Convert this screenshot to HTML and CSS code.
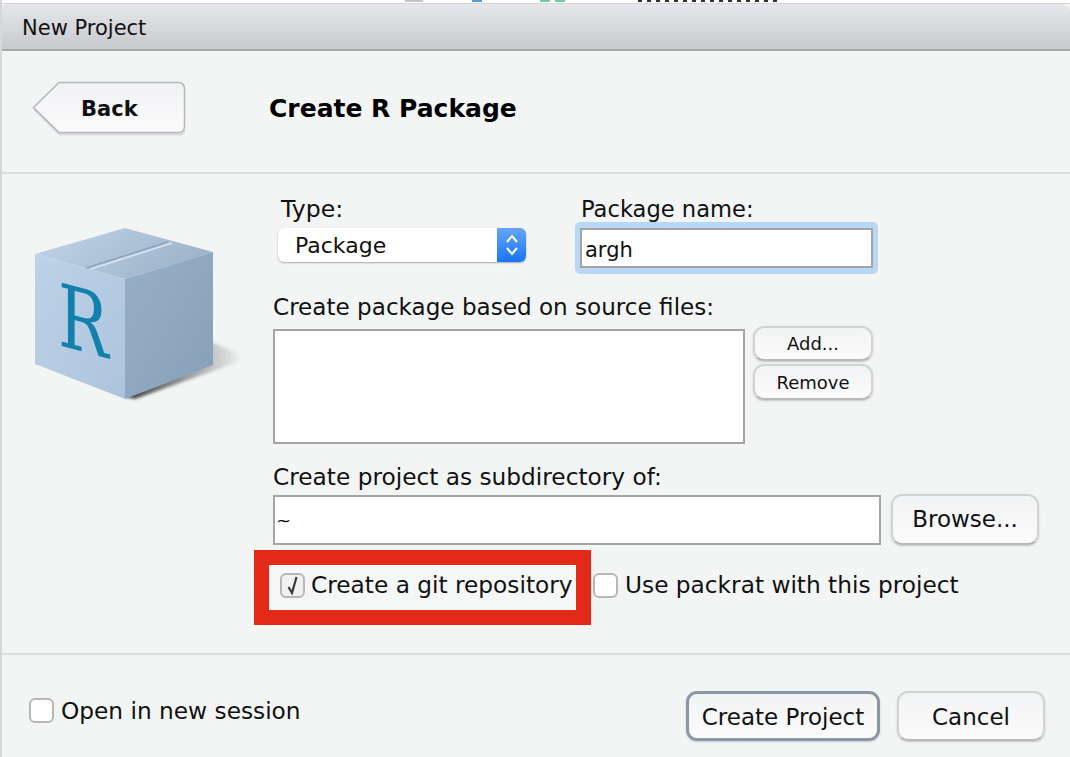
FILE: index.html
```html
<!DOCTYPE html>
<html>

<head>
  <title>New Project</title>
  <link rel="stylesheet" href="styles.css">
</head>

<body>
  <div class="window">
    <div class="behind">
      <span class="scrap scrapGrey"></span>
      <span class="scrap scrapBlue"></span>
      <span class="scrap scrapGreen"></span>
      <span class="scrap scrapGreen2"></span>
      <span class="scrap scrapDark"></span>
    </div>
    <div class="titlebar">New Project</div>

    <div class="header">
      <button type="button" class="backButton">
        <svg width="160" height="60" viewBox="0 0 160 60">
          <defs>
            <linearGradient id="backFill" x1="0" x2="0" y1="0" y2="1">
              <stop offset="0%" stop-color="#f1f2f4" />
              <stop offset="100%" stop-color="#fbfbfc" />
            </linearGradient>
          </defs>
          <path d="M27 2 H148 Q153 2 153 7 V48 Q153 53 148 53 H27 L1 27 Z" fill="#d8dade" transform="translate(0 1.5)" />
          <path d="M27 1.5 H146 Q152.5 1.5 152.5 8 V45 Q152.5 51.5 146 51.5 H27 L1.5 26.5 Z" fill="url(#backFill)" stroke="#b4b7bd" stroke-width="1.5" />
          <text x="49" y="35" class="backLabel">Back</text>
        </svg>
      </button>
      <h1 class="pageTitle">Create R Package</h1>
    </div>

    <div class="main">
      <div class="iconColumn">
        <svg width="240" height="210" viewBox="0 0 240 210">
          <defs>
            <linearGradient id="topFace" x1="0" x2="1" y1="0" y2="0.4">
              <stop offset="0%" stop-color="#c3d6ea" />
              <stop offset="100%" stop-color="#9db4ca" />
            </linearGradient>
            <linearGradient id="leftFace" x1="0" x2="1" y1="0" y2="1">
              <stop offset="0%" stop-color="#bdd2e7" />
              <stop offset="100%" stop-color="#adc4dc" />
            </linearGradient>
            <linearGradient id="rightFace" x1="0" x2="1" y1="0" y2="1">
              <stop offset="0%" stop-color="#98afc6" />
              <stop offset="100%" stop-color="#86a0b9" />
            </linearGradient>
            <linearGradient id="cubeShadow" x1="0" x2="1" y1="0" y2="0">
              <stop offset="0%" stop-color="#3c3c3c" />
              <stop offset="100%" stop-color="#3c3c3c" stop-opacity="0.05" />
            </linearGradient>
            <filter id="soften">
              <feGaussianBlur stdDeviation="1.5" />
            </filter>
          </defs>
          <polygon points="213,144 238,154 238,163 135,200 125,198" transform="translate(0 -1)" fill="url(#cubeShadow)" filter="url(#soften)" />
          <polygon points="125,28 213,52 125,79 35,54" fill="url(#topFace)" />
          <polygon points="35,54 125,79 125,199 35,164" fill="url(#leftFace)" />
          <polygon points="125,79 213,52 213,165 125,199" fill="url(#rightFace)" />
          <line x1="86" y1="68" x2="168" y2="42" stroke="#8fa5bc" stroke-width="1.5" />
          <line x1="91" y1="69" x2="172" y2="43" stroke="#dbe6f1" stroke-width="1.5" />
          <text class="cubeLetter" transform="matrix(0.82 0.22 0 1.06 58 145)">R</text>
        </svg>
      </div>

      <div class="form">
        <div class="topRow">
          <div class="typeField">
            <label class="fieldLabel typeLabel">Type:</label>
            <div class="select">
              <span class="selectValue">Package</span>
              <span class="selectArrows">
                <svg width="14" height="24" viewBox="0 0 14 24" fill="none" stroke="#ffffff" stroke-width="2">
                  <path d="M2 9 L7 3 L12 9" />
                  <path d="M2 15 L7 21 L12 15" />
                </svg>
              </span>
            </div>
          </div>
          <div class="nameField">
            <label class="fieldLabel nameLabel">Package name:</label>
            <div class="focusRing">
              <div class="textBox nameBox">argh</div>
            </div>
          </div>
        </div>

        <label class="fieldLabel filesLabel">Create package based on source files:</label>
        <div class="filesRow">
          <div class="listBox"></div>
          <div class="filesButtons">
            <button type="button" class="button smallButton">Add...</button>
            <button type="button" class="button smallButton removeButton">Remove</button>
          </div>
        </div>

        <label class="fieldLabel dirLabel">Create project as subdirectory of:</label>
        <div class="dirRow">
          <div class="textBox dirBox">~</div>
          <button type="button" class="button browseButton">Browse...</button>
        </div>

        <div class="optionsRow">
          <div class="highlight">
            <span class="checkbox">
              <svg width="16" height="20" viewBox="0 0 16 20" fill="none" stroke="#3a3a3a" stroke-width="2.2">
                <path d="M3.5 12 L7 18 L11.5 2" />
              </svg>
            </span>
            <span class="checkLabel">Create a git repository</span>
          </div>
          <div class="packratOption">
            <span class="checkbox"></span>
            <span class="checkLabel">Use packrat with this project</span>
          </div>
        </div>
      </div>
    </div>

    <div class="footer">
      <div class="sessionOption">
        <span class="checkbox"></span>
        <span class="checkLabel">Open in new session</span>
      </div>
      <div class="footerButtons">
        <button type="button" class="button footerButton defaultButton">Create Project</button>
        <button type="button" class="button footerButton cancelButton">Cancel</button>
      </div>
    </div>
  </div>
</body>

</html>
```

FILE: styles.css
```css
html, body {
  margin: 0;
  padding: 0;
}

body {
  font-family: "DejaVu Sans", sans-serif;
  font-size: 23.25px;
  color: #111111;
  background: #f3f5f5;
}

.window {
  width: 1070px;
  height: 757px;
  overflow: hidden;
  box-sizing: border-box;
  border-left: 2px solid #d6d7d9;
  background: #f3f5f5;
}

/* bits of the window behind, showing above the title bar */
.behind {
  display: flex;
  height: 4px;
  margin-left: -2px;
  background: #ffffff;
  border-bottom: 1px solid #d4d5d7;
  box-sizing: border-box;
}

.scrap {
  height: 2px;
}

.scrapGrey {
  width: 18px;
  margin-left: 405px;
  background: #c4c4c4;
}

.scrapBlue {
  width: 10px;
  margin-left: 49px;
  background: #5a9ad6;
}

.scrapGreen {
  width: 10px;
  margin-left: 58px;
  background: #6fcf9f;
}

.scrapGreen2 {
  width: 10px;
  margin-left: 5px;
  background: #6fcf9f;
}

.scrapDark {
  width: 140px;
  margin-left: 73px;
  background: repeating-linear-gradient(90deg, #333333 0 4px, #ffffff 4px 9px);
}

.titlebar {
  box-sizing: border-box;
  height: 47px;
  margin-left: -2px;
  padding: 8px 0 0 22px;
  font-size: 21px;
  line-height: 32px;
  border-top-left-radius: 8px;
  border-top-right-radius: 8px;
  border-bottom: 2px solid #a9aaad;
  background: linear-gradient(#e6e7ea, #c8c9cc);
}

.header {
  box-sizing: border-box;
  height: 123px;
  display: flex;
  align-items: flex-start;
  border-bottom: 2px solid #dcdddd;
}

.backButton {
  border: 0;
  padding: 0;
  margin: 30px 0 0 30px;
  background: none;
  width: 160px;
  height: 60px;
}

.backLabel {
  font-family: "DejaVu Sans", sans-serif;
  font-size: 21px;
  font-weight: bold;
  fill: #111111;
}

.pageTitle {
  margin: 40px 0 0 77px;
  font-size: 25px;
  line-height: 36px;
  font-weight: bold;
  color: #000000;
}

.main {
  box-sizing: border-box;
  height: 481px;
  display: flex;
  border-bottom: 2px solid #dcdddd;
}

.iconColumn {
  width: 271px;
  padding-top: 26px;
  margin-left: -2px;
  margin-right: 2px;
}

.form {
  width: 770px;
  padding-top: 22px;
}

.fieldLabel {
  display: block;
  line-height: 26px;
}

.topRow {
  display: flex;
}

.typeField {
  width: 302px;
}

.typeLabel {
  margin-left: 8px;
  font-size: 23.6px;
}

.select {
  display: flex;
  box-sizing: border-box;
  width: 248px;
  height: 34px;
  margin: 6px 0 0 5px;
  border-radius: 6px;
  overflow: hidden;
  background: #ffffff;
  box-shadow: 0 1px 2px #a9abae;
}

.selectValue {
  flex: 1;
  padding-left: 17px;
  font-size: 22px;
  line-height: 35px;
}

.selectArrows {
  display: flex;
  align-items: center;
  justify-content: center;
  width: 29px;
  background: linear-gradient(#64a5fb, #1a74f8);
}

.nameLabel {
  margin-left: 6px;
  font-size: 22.6px;
}

.focusRing {
  box-sizing: border-box;
  width: 303px;
  height: 52px;
  padding: 6px 5px;
  border-radius: 5px;
  background: #b9d8f6;
}

.textBox {
  box-sizing: border-box;
  border: 2px solid #a4a4a4;
  background: #ffffff;
}

.nameBox {
  width: 293px;
  height: 40px;
  padding-left: 3px;
  font-size: 21px;
  line-height: 40px;
}

.filesLabel {
  margin-top: 20px;
  font-size: 23.1px;
}

.filesRow {
  display: flex;
  margin-top: 9px;
}

.listBox {
  box-sizing: border-box;
  width: 472px;
  height: 115px;
  border: 2px solid #a4a4a4;
  background: #ffffff;
}

.filesButtons {
  display: flex;
  flex-direction: column;
  gap: 3px;
  margin: -3px 0 0 8px;
}

.button {
  box-sizing: border-box;
  padding: 0;
  font-family: "DejaVu Sans", sans-serif;
  color: #111111;
  border: 2px solid #d2d3d5;
  border-bottom-color: #b8b9bb;
  border-radius: 11px;
  background: linear-gradient(#f2f3f4, #fbfbfc);
  box-shadow: 0 1px 2px #c4c5c7;
}

.smallButton {
  width: 120px;
  height: 35px;
  font-size: 18px;
}

.removeButton {
  height: 36px;
}

.dirLabel {
  margin-top: 20px;
}

.dirRow {
  display: flex;
  align-items: center;
  margin-top: 4px;
}

.dirBox {
  width: 608px;
  height: 50px;
  padding-left: 1px;
  font-size: 18px;
  line-height: 48px;
}

.browseButton {
  width: 148px;
  height: 51px;
  margin-left: 10px;
  padding-bottom: 1px;
  font-size: 23px;
}

.optionsRow {
  display: flex;
  margin-top: 5px;
  margin-left: -19px;
}

.highlight {
  display: flex;
  align-items: center;
  box-sizing: border-box;
  width: 337px;
  height: 75px;
  padding: 0 0 5px 11px;
  border: 15px solid #e32a19;
  background: #f5f7f7;
}

.checkbox {
  display: flex;
  align-items: center;
  justify-content: center;
  flex: none;
  box-sizing: border-box;
  width: 25px;
  height: 25px;
  border: 2px solid #b7b7b9;
  border-radius: 6px;
  background: #ffffff;
}

.highlight .checkbox {
  background: #f1f1f3;
}

.checkLabel {
  margin-left: 6px;
  padding-bottom: 2px;
  white-space: nowrap;
}

.packratOption {
  display: flex;
  align-items: center;
  height: 70px;
  margin-left: 2px;
}

.packratOption .checkLabel {
  margin-left: 7px;
}

.footer {
  display: flex;
  justify-content: space-between;
  height: 100px;
}

.sessionOption {
  display: flex;
  align-items: center;
  height: 25px;
  margin: 43px 0 0 27px;
}

.sessionOption .checkLabel {
  margin-left: 7px;
  padding-bottom: 0;
}

.footerButtons {
  display: flex;
  gap: 17px;
  margin: 36px 25px 0 0;
}

.footerButton {
  height: 50px;
  padding-top: 1px;
  font-size: 23px;
}

.defaultButton {
  width: 194px;
  border: 3px solid #8c96a5;
}

.cancelButton {
  width: 148px;
}

.cubeLetter {
  font-family: "DejaVu Serif", serif;
  font-size: 82px;
  fill: #1180ac;
}
```
